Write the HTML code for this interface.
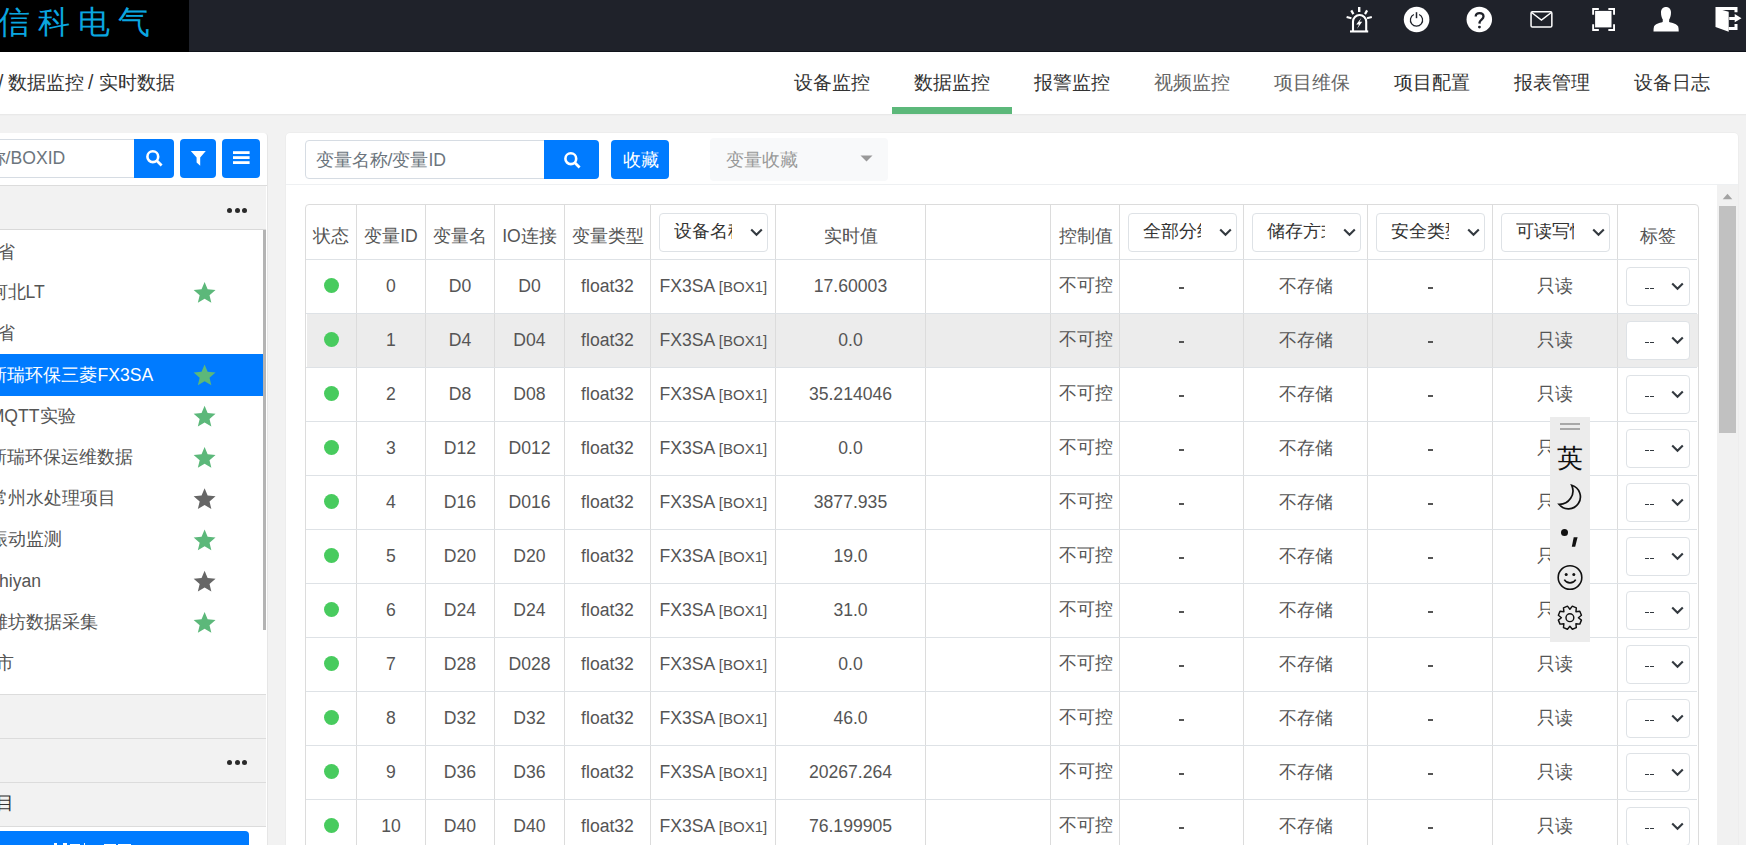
<!DOCTYPE html><html><head><meta charset="utf-8"><style>
*{box-sizing:border-box;margin:0;padding:0}
html,body{width:1746px;height:845px;overflow:hidden;background:#f2f2f2;font-family:"Liberation Sans",sans-serif;color:#555;position:relative}
.ab{position:absolute}
.t{position:absolute;white-space:nowrap;line-height:1}
.c{position:absolute;display:flex;align-items:center;justify-content:center;white-space:nowrap;font-size:17.6px;line-height:1;color:#555}
.vl{position:absolute;width:1px;background:#dcdcdc}
.hl{position:absolute;height:1px;background:#dee2e6}
.sel{position:absolute;border:1px solid #dee2e6;border-radius:4px;background:#fff}
.chev{position:absolute;width:12px;height:8px}
</style></head><body>
<div class="ab" style="left:0;top:0;width:1746px;height:52px;background:#1f222a"></div>
<div class="ab" style="left:0;top:51px;width:1746px;height:1px;background:#10131b"></div>
<div class="ab" style="left:0;top:0;width:189px;height:52px;background:#000"></div>
<div class="t" style="left:-2px;top:6px;font-family:'Liberation Serif',serif;font-size:32px;letter-spacing:8px;color:#0aa6e0">信科电气</div>
<svg class="ab" style="left:1340px;top:2px" width="36" height="36" viewBox="0 0 36 36">
<g stroke="#fff" fill="none">
<path d="M19.2 5v5" stroke-width="2.4"/>
<path d="M11.3 8.4l2.1 3.7" stroke-width="2.2"/><path d="M27.1 8.4l-2.1 3.7" stroke-width="2.2"/>
<path d="M6.6 15l4.8 1.2" stroke-width="2.2"/><path d="M31.8 15l-4.8 1.2" stroke-width="2.2"/>
<path d="M13 29v-9.4a6.6 6.6 0 0 1 13.2 0v9.4" stroke-width="2.1"/>
</g>
<rect x="10" y="28.4" width="18.2" height="2.1" fill="#fff"/>
<path d="M21.4 15.8L16.2 22.4H19L17 26.9L22.2 19.8H19.5Z" fill="#fff"/>
</svg>
<svg class="ab" style="left:1403px;top:6px" width="27" height="27" viewBox="0 0 27 27">
<circle cx="13.6" cy="13.5" r="12.8" fill="#fff"/>
<path d="M10.9 8.47A6.1 6.1 0 1 0 16.1 8.47" stroke="#1f222a" stroke-width="1.25" fill="none"/>
<path d="M13.5 6.2v6" stroke="#1f222a" stroke-width="1.5"/>
</svg>
<svg class="ab" style="left:1465.5px;top:6px" width="27" height="27" viewBox="0 0 27 27">
<circle cx="13.3" cy="13.5" r="12.75" fill="#fff"/>
<path d="M9.7 10.6C9.7 8.3 11.3 7.1 13.5 7.1C15.8 7.1 17.5 8.5 17.5 10.5C17.5 13.2 14.3 13.6 13.6 16.2L13.5 17.6" stroke="#1f222a" stroke-width="2.3" fill="none"/>
<circle cx="13.45" cy="21.1" r="1.45" fill="#1f222a"/>
</svg>
<svg class="ab" style="left:1529px;top:10px" width="25" height="19" viewBox="0 0 25 19">
<rect x="2.05" y="1.85" width="20.8" height="15.2" rx="1.4" stroke="#fff" stroke-width="1.5" fill="none"/>
<path d="M2.6 2.5l9.85 7.6 9.85-7.6" stroke="#fff" stroke-width="1.5" fill="none"/>
</svg>
<svg class="ab" style="left:1591px;top:7px" width="26" height="26" viewBox="0 0 26 26">
<rect x="4.1" y="3.9" width="16.4" height="16.5" fill="#fff"/>
<path d="M2.15 7.65V1.95H7.85M17.35 1.95H23.05V7.65M23.05 17.25V22.95H17.35M7.85 22.95H2.15V17.25" stroke="#fff" stroke-width="1.9" fill="none"/>
</svg>
<svg class="ab" style="left:1648px;top:2px" width="36" height="36" viewBox="0 0 36 36">
<path d="M18 5.1C15 5.1 13 7.3 13 10.5C13 13.5 13.8 16 14.8 17.5L14.7 20C11 21 7 22 6 24.5C5.6 25.8 5.5 27.5 5.5 29.6H30.7C30.7 27.5 30.6 25.8 30.2 24.5C29 22 25 21 21.1 20L21.2 17.5C22.2 16 23 13.5 23 10.5C23 7.3 21 5.1 18 5.1Z" fill="#fff"/>
</svg>
<svg class="ab" style="left:1710px;top:2px" width="36" height="36" viewBox="0 0 36 36">
<path d="M5.5 4.9H27.5V10.2H24.5V7.9H12.4L18.7 9.8V29.8L5.5 25.1Z" fill="#fff"/>
<path d="M18.7 24.9H24.5V22H27.5V27.9H18.7Z" fill="#fff"/>
<path d="M19.2 14.9H24.7V12.1L31.5 16.2L24.7 20.2V18.1H19.2Z" fill="#fff"/>
</svg>
<div class="ab" style="left:0;top:52px;width:1746px;height:62px;background:#fff"></div>
<div class="ab" style="left:0;top:114px;width:1746px;height:2px;background:linear-gradient(#e6e6e6,#f2f2f2)"></div>
<div class="t" style="left:-2px;top:73px;font-size:19.3px;color:#333">/</div>
<div class="t" style="left:8px;top:73px;font-size:19.3px;color:#333">数据监控</div>
<div class="t" style="left:88px;top:73px;font-size:19.3px;color:#333">/</div>
<div class="t" style="left:99px;top:73px;font-size:19.3px;color:#333">实时数据</div>
<div class="ab" style="left:772px;top:52px;width:120px;height:62px;display:flex;justify-content:center;align-items:center;font-size:19.3px;color:#333;padding-bottom:2px">设备监控</div>
<div class="ab" style="left:892px;top:52px;width:120px;height:62px;display:flex;justify-content:center;align-items:center;font-size:19.3px;color:#333;padding-bottom:2px">数据监控</div>
<div class="ab" style="left:1012px;top:52px;width:120px;height:62px;display:flex;justify-content:center;align-items:center;font-size:19.3px;color:#333;padding-bottom:2px">报警监控</div>
<div class="ab" style="left:1132px;top:52px;width:120px;height:62px;display:flex;justify-content:center;align-items:center;font-size:19.3px;color:#666;padding-bottom:2px">视频监控</div>
<div class="ab" style="left:1252px;top:52px;width:120px;height:62px;display:flex;justify-content:center;align-items:center;font-size:19.3px;color:#666;padding-bottom:2px">项目维保</div>
<div class="ab" style="left:1372px;top:52px;width:120px;height:62px;display:flex;justify-content:center;align-items:center;font-size:19.3px;color:#333;padding-bottom:2px">项目配置</div>
<div class="ab" style="left:1492px;top:52px;width:120px;height:62px;display:flex;justify-content:center;align-items:center;font-size:19.3px;color:#333;padding-bottom:2px">报表管理</div>
<div class="ab" style="left:1612px;top:52px;width:120px;height:62px;display:flex;justify-content:center;align-items:center;font-size:19.3px;color:#333;padding-bottom:2px">设备日志</div>
<div class="ab" style="left:892px;top:107px;width:120px;height:7px;background:#5cb87a"></div>
<div class="ab" style="left:-10px;top:133px;width:278px;height:760px;background:#fff;border:1px solid #e6e6e6;border-top:none;border-radius:4px"></div>
<div class="ab" style="left:-10px;top:139px;width:145px;height:39px;border:1px solid #d6dce3;background:#fff"></div>
<div class="t" style="left:-12.4px;top:150px;font-size:17.6px;color:#6c757d">称/BOXID</div>
<div class="ab" style="left:134px;top:139px;width:40px;height:39px;background:#007bff;border-radius:0 4px 4px 0"></div>
<div class="ab" style="left:180px;top:139px;width:36px;height:39px;background:#007bff;border-radius:4px"></div>
<div class="ab" style="left:222px;top:139px;width:38px;height:39px;background:#007bff;border-radius:4px"></div>
<svg class="ab" style="left:145px;top:149px" width="18" height="18" viewBox="0 0 18 18">
<circle cx="7.8" cy="7.7" r="5.4" stroke="#fff" stroke-width="2.6" fill="none"/>
<path d="M11.6 11.5l5 5" stroke="#fff" stroke-width="2.7"/></svg>
<svg class="ab" style="left:190px;top:150px" width="17" height="17" viewBox="0 0 17 17">
<path d="M0.8 1h15l-5.6 6.4v8.4l-3.6-3.4v-5z" fill="#fff"/></svg>
<svg class="ab" style="left:232px;top:150px" width="18" height="16" viewBox="0 0 18 16">
<g stroke="#fff" stroke-width="2.8" stroke-linecap="butt"><path d="M1 2.6h16.6"/><path d="M1 7.6h16.6"/><path d="M1 12.6h16.6"/></g></svg>
<div class="ab" style="left:-10px;top:185px;width:277px;height:1px;background:#dcdcdc"></div>
<div class="ab" style="left:-10px;top:186px;width:276px;height:44px;background:#f2f2f2;border-bottom:1px solid #d9d9d9"></div>
<div class="ab" style="left:227.2px;top:207.8px;width:5.2px;height:5.2px;border-radius:50%;background:#2a2a2a"></div><div class="ab" style="left:234.7px;top:207.8px;width:5.2px;height:5.2px;border-radius:50%;background:#2a2a2a"></div><div class="ab" style="left:242.2px;top:207.8px;width:5.2px;height:5.2px;border-radius:50%;background:#2a2a2a"></div>
<div class="ab" style="left:0;top:354px;width:263px;height:42px;background:#007bff"></div>
<div class="t" style="left:-3.5px;top:244px;font-size:17.6px;color:#555">省</div>
<div class="t" style="left:-10.4px;top:284px;font-size:17.6px;color:#555">河北LT</div>
<div class="t" style="left:-3.5px;top:325px;font-size:17.6px;color:#555">省</div>
<div class="t" style="left:-10.6px;top:367px;font-size:17.6px;color:#fff">新瑞环保三菱FX3SA</div>
<div class="t" style="left:-10.3px;top:408px;font-size:17.6px;color:#555">MQTT实验</div>
<div class="t" style="left:-10.6px;top:449px;font-size:17.6px;color:#555">新瑞环保运维数据</div>
<div class="t" style="left:-10.3px;top:490px;font-size:17.6px;color:#555">常州水处理项目</div>
<div class="t" style="left:-9.6px;top:531px;font-size:17.6px;color:#555">振动监测</div>
<div class="t" style="left:-9.8px;top:573px;font-size:17.6px;color:#555">shiyan</div>
<div class="t" style="left:-9.6px;top:614px;font-size:17.6px;color:#555">潍坊数据采集</div>
<div class="t" style="left:-3.6px;top:655px;font-size:17.6px;color:#555">市</div>
<svg class="ab" style="left:0;top:0" width="267" height="845"><polygon points="204.60,282.05 207.64,289.36 215.54,290.00 209.52,295.15 211.36,302.85 204.60,298.73 197.84,302.85 199.68,295.15 193.66,290.00 201.56,289.36" fill="#5cb87a"/><polygon points="204.60,364.55 207.64,371.86 215.54,372.50 209.52,377.65 211.36,385.35 204.60,381.23 197.84,385.35 199.68,377.65 193.66,372.50 201.56,371.86" fill="#5cb87a"/><polygon points="204.60,405.80 207.64,413.11 215.54,413.75 209.52,418.90 211.36,426.60 204.60,422.48 197.84,426.60 199.68,418.90 193.66,413.75 201.56,413.11" fill="#5cb87a"/><polygon points="204.60,447.05 207.64,454.36 215.54,455.00 209.52,460.15 211.36,467.85 204.60,463.73 197.84,467.85 199.68,460.15 193.66,455.00 201.56,454.36" fill="#5cb87a"/><polygon points="204.60,488.30 207.64,495.61 215.54,496.25 209.52,501.40 211.36,509.10 204.60,504.98 197.84,509.10 199.68,501.40 193.66,496.25 201.56,495.61" fill="#666"/><polygon points="204.60,529.55 207.64,536.86 215.54,537.50 209.52,542.65 211.36,550.35 204.60,546.22 197.84,550.35 199.68,542.65 193.66,537.50 201.56,536.86" fill="#5cb87a"/><polygon points="204.60,570.80 207.64,578.11 215.54,578.75 209.52,583.90 211.36,591.60 204.60,587.47 197.84,591.60 199.68,583.90 193.66,578.75 201.56,578.11" fill="#666"/><polygon points="204.60,612.05 207.64,619.36 215.54,620.00 209.52,625.15 211.36,632.85 204.60,628.72 197.84,632.85 199.68,625.15 193.66,620.00 201.56,619.36" fill="#5cb87a"/></svg>
<div class="ab" style="left:263px;top:230px;width:3px;height:400px;background:#b4b4b4"></div>
<div class="ab" style="left:-10px;top:694px;width:276px;height:133px;background:#f2f2f2"></div>
<div class="ab" style="left:-10px;top:694px;width:276px;height:1px;background:#dcdcdc"></div>
<div class="ab" style="left:-10px;top:738px;width:276px;height:1px;background:#dcdcdc"></div>
<div class="ab" style="left:-10px;top:782px;width:276px;height:1px;background:#dcdcdc"></div>
<div class="ab" style="left:-10px;top:826px;width:276px;height:1px;background:#dcdcdc"></div>
<div class="ab" style="left:227.2px;top:759.8px;width:5.2px;height:5.2px;border-radius:50%;background:#2a2a2a"></div><div class="ab" style="left:234.7px;top:759.8px;width:5.2px;height:5.2px;border-radius:50%;background:#2a2a2a"></div><div class="ab" style="left:242.2px;top:759.8px;width:5.2px;height:5.2px;border-radius:50%;background:#2a2a2a"></div>
<div class="t" style="left:-4px;top:795px;font-size:17.6px;color:#333">目</div>
<div class="ab" style="left:-10px;top:831px;width:259px;height:40px;background:#007bff;border-radius:4px"></div>
<div class="ab" style="left:53.5px;top:843px;width:3.5px;height:2px;background:#fff"></div>
<div class="ab" style="left:63px;top:843px;width:3.5px;height:2px;background:#fff"></div>
<div class="ab" style="left:70px;top:843.5px;width:10px;height:1.5px;background:#fff"></div>
<div class="ab" style="left:83.5px;top:843px;width:1.2px;height:2px;background:#fff"></div>
<div class="ab" style="left:104px;top:843.5px;width:12px;height:1.5px;background:#fff"></div>
<div class="ab" style="left:118px;top:843.5px;width:12.7px;height:1.5px;background:#fff"></div>
<div class="ab" style="left:286px;top:133px;width:1452px;height:760px;background:#fff;border-radius:4px;box-shadow:0 0 0 0.5px #e8e8e8"></div>
<div class="ab" style="left:286px;top:184px;width:1452px;height:1px;background:#eef0f2"></div>
<div class="ab" style="left:305px;top:140px;width:240px;height:39px;border:1px solid #d6dce3;border-radius:4px 0 0 4px"></div>
<div class="t" style="left:315.5px;top:151.5px;font-size:17.6px;color:#6c757d">变量名称/变量ID</div>
<div class="ab" style="left:544px;top:140px;width:55px;height:39px;background:#007bff;border-radius:0 4px 4px 0"></div>
<svg class="ab" style="left:563px;top:151px" width="18" height="18" viewBox="0 0 18 18">
<circle cx="7.8" cy="7.7" r="5.4" stroke="#fff" stroke-width="2.6" fill="none"/>
<path d="M11.6 11.5l5 5" stroke="#fff" stroke-width="2.7"/></svg>
<div class="ab" style="left:611px;top:140px;width:58px;height:39px;background:#007bff;border-radius:4px"></div>
<div class="t" style="left:623px;top:151.5px;font-size:17.6px;color:#fff">收藏</div>
<div class="ab" style="left:710px;top:138px;width:178px;height:43px;background:#f8f9fa;border-radius:4px"></div>
<div class="t" style="left:726px;top:151.5px;font-size:17.6px;color:#999">变量收藏</div>
<svg class="ab" style="left:860px;top:155px" width="13" height="7" viewBox="0 0 13 7"><path d="M0.5 0.5h12l-6 6z" fill="#999"/></svg>
<div class="ab" style="left:1717px;top:185px;width:21px;height:660px;background:#f1f1f1"></div>
<svg class="ab" style="left:1722px;top:193px" width="11" height="7" viewBox="0 0 11 7"><path d="M5.5 0.8l4.8 5.4h-9.6z" fill="#a3a3a3"/></svg>
<div class="ab" style="left:1719px;top:206px;width:17px;height:227px;background:#c1c1c1"></div>
<div class="ab" style="left:307px;top:314px;width:1391px;height:53px;background:#ececec"></div>
<div class="ab" style="left:305px;top:204px;width:1394px;height:700px;border:1px solid #dcdcdc;border-radius:4px"></div>
<div class="vl" style="left:356px;top:204px;height:641px"></div>
<div class="vl" style="left:425px;top:204px;height:641px"></div>
<div class="vl" style="left:494px;top:204px;height:641px"></div>
<div class="vl" style="left:564px;top:204px;height:641px"></div>
<div class="vl" style="left:650px;top:204px;height:641px"></div>
<div class="vl" style="left:775px;top:204px;height:641px"></div>
<div class="vl" style="left:925px;top:204px;height:641px"></div>
<div class="vl" style="left:1050px;top:204px;height:641px"></div>
<div class="vl" style="left:1119px;top:204px;height:641px"></div>
<div class="vl" style="left:1243px;top:204px;height:641px"></div>
<div class="vl" style="left:1367px;top:204px;height:641px"></div>
<div class="vl" style="left:1492px;top:204px;height:641px"></div>
<div class="vl" style="left:1617px;top:204px;height:641px"></div>
<div class="hl" style="left:306px;top:259px;width:1391px"></div>
<div class="hl" style="left:306px;top:313px;width:1391px"></div>
<div class="hl" style="left:306px;top:367px;width:1391px"></div>
<div class="hl" style="left:306px;top:421px;width:1391px"></div>
<div class="hl" style="left:306px;top:475px;width:1391px"></div>
<div class="hl" style="left:306px;top:529px;width:1391px"></div>
<div class="hl" style="left:306px;top:583px;width:1391px"></div>
<div class="hl" style="left:306px;top:637px;width:1391px"></div>
<div class="hl" style="left:306px;top:691px;width:1391px"></div>
<div class="hl" style="left:306px;top:745px;width:1391px"></div>
<div class="hl" style="left:306px;top:799px;width:1391px"></div>
<div class="c" style="left:306px;top:219px;width:50px;height:36px">状态</div>
<div class="c" style="left:357px;top:219px;width:68px;height:36px">变量ID</div>
<div class="c" style="left:426px;top:219px;width:68px;height:36px">变量名</div>
<div class="c" style="left:495px;top:219px;width:69px;height:36px">IO连接</div>
<div class="c" style="left:565px;top:219px;width:85px;height:36px">变量类型</div>
<div class="c" style="left:776px;top:219px;width:149px;height:36px">实时值</div>
<div class="t" style="left:1059px;top:228px;font-size:17.6px;color:#555">控制值</div>
<div class="c" style="left:1618px;top:219px;width:80px;height:36px">标签</div>
<div class="sel" style="left:659px;top:213px;width:109px;height:39px;overflow:hidden"></div>
<div class="t" style="left:674px;top:223px;width:58px;overflow:hidden;font-size:17.6px;color:#333">设备名称</div>
<svg class="ab" style="left:749.5px;top:228px" width="13" height="9" viewBox="0 0 13 9"><path d="M1.2 1.5l5.3 5.3 5.3-5.3" stroke="#343a40" stroke-width="2.1" fill="none"/></svg>
<div class="sel" style="left:1128px;top:213px;width:109px;height:39px;overflow:hidden"></div>
<div class="t" style="left:1143px;top:223px;width:58px;overflow:hidden;font-size:17.6px;color:#333">全部分组</div>
<svg class="ab" style="left:1218.5px;top:228px" width="13" height="9" viewBox="0 0 13 9"><path d="M1.2 1.5l5.3 5.3 5.3-5.3" stroke="#343a40" stroke-width="2.1" fill="none"/></svg>
<div class="sel" style="left:1252px;top:213px;width:109px;height:39px;overflow:hidden"></div>
<div class="t" style="left:1267px;top:223px;width:58px;overflow:hidden;font-size:17.6px;color:#333">储存方式</div>
<svg class="ab" style="left:1342.5px;top:228px" width="13" height="9" viewBox="0 0 13 9"><path d="M1.2 1.5l5.3 5.3 5.3-5.3" stroke="#343a40" stroke-width="2.1" fill="none"/></svg>
<div class="sel" style="left:1376px;top:213px;width:109px;height:39px;overflow:hidden"></div>
<div class="t" style="left:1391px;top:223px;width:58px;overflow:hidden;font-size:17.6px;color:#333">安全类型</div>
<svg class="ab" style="left:1466.5px;top:228px" width="13" height="9" viewBox="0 0 13 9"><path d="M1.2 1.5l5.3 5.3 5.3-5.3" stroke="#343a40" stroke-width="2.1" fill="none"/></svg>
<div class="sel" style="left:1501px;top:213px;width:109px;height:39px;overflow:hidden"></div>
<div class="t" style="left:1516px;top:223px;width:58px;overflow:hidden;font-size:17.6px;color:#333">可读写性</div>
<svg class="ab" style="left:1591.5px;top:228px" width="13" height="9" viewBox="0 0 13 9"><path d="M1.2 1.5l5.3 5.3 5.3-5.3" stroke="#343a40" stroke-width="2.1" fill="none"/></svg>
<div class="ab" style="left:323.6px;top:278px;width:15.2px;height:15.2px;border-radius:50%;background:#48cb5e"></div>
<div class="c" style="left:357px;top:260px;width:68px;height:53px;">0</div>
<div class="c" style="left:426px;top:260px;width:68px;height:53px;">D0</div>
<div class="c" style="left:495px;top:260px;width:69px;height:53px;">D0</div>
<div class="c" style="left:565px;top:260px;width:85px;height:53px;">float32</div>
<div class="t" style="left:659.5px;top:278px;font-size:17.6px;color:#555">FX3SA<span style="font-size:15px;margin-left:3.6px">[BOX1]</span></div>
<div class="c" style="left:776px;top:260px;width:149px;height:53px;">17.60003</div>
<div class="t" style="left:1059px;top:277px;font-size:17.6px;color:#555">不可控</div>
<div class="ab" style="left:1178.5px;top:287.2px;width:5.5px;height:2px;background:#555"></div>
<div class="ab" style="left:1427.5px;top:287.2px;width:5.5px;height:2px;background:#555"></div>
<div class="c" style="left:1244px;top:260px;width:123px;height:53px;">不存储</div>
<div class="c" style="left:1493px;top:260px;width:124px;height:53px;">只读</div>
<div class="sel" style="left:1626px;top:267px;width:64px;height:39px"></div>
<div class="ab" style="left:1644.5px;top:287.6px;width:4px;height:1.4px;background:#343a40"></div>
<div class="ab" style="left:1649.5px;top:287.6px;width:4px;height:1.4px;background:#343a40"></div>
<svg class="ab" style="left:1671px;top:282px" width="13" height="9" viewBox="0 0 13 9"><path d="M1.2 1.5l5.3 5.3 5.3-5.3" stroke="#343a40" stroke-width="2.1" fill="none"/></svg>
<div class="ab" style="left:323.6px;top:332px;width:15.2px;height:15.2px;border-radius:50%;background:#48cb5e"></div>
<div class="c" style="left:357px;top:314px;width:68px;height:53px;">1</div>
<div class="c" style="left:426px;top:314px;width:68px;height:53px;">D4</div>
<div class="c" style="left:495px;top:314px;width:69px;height:53px;">D04</div>
<div class="c" style="left:565px;top:314px;width:85px;height:53px;">float32</div>
<div class="t" style="left:659.5px;top:332px;font-size:17.6px;color:#555">FX3SA<span style="font-size:15px;margin-left:3.6px">[BOX1]</span></div>
<div class="c" style="left:776px;top:314px;width:149px;height:53px;">0.0</div>
<div class="t" style="left:1059px;top:331px;font-size:17.6px;color:#555">不可控</div>
<div class="ab" style="left:1178.5px;top:341.2px;width:5.5px;height:2px;background:#555"></div>
<div class="ab" style="left:1427.5px;top:341.2px;width:5.5px;height:2px;background:#555"></div>
<div class="c" style="left:1244px;top:314px;width:123px;height:53px;">不存储</div>
<div class="c" style="left:1493px;top:314px;width:124px;height:53px;">只读</div>
<div class="sel" style="left:1626px;top:321px;width:64px;height:39px"></div>
<div class="ab" style="left:1644.5px;top:341.6px;width:4px;height:1.4px;background:#343a40"></div>
<div class="ab" style="left:1649.5px;top:341.6px;width:4px;height:1.4px;background:#343a40"></div>
<svg class="ab" style="left:1671px;top:336px" width="13" height="9" viewBox="0 0 13 9"><path d="M1.2 1.5l5.3 5.3 5.3-5.3" stroke="#343a40" stroke-width="2.1" fill="none"/></svg>
<div class="ab" style="left:323.6px;top:386px;width:15.2px;height:15.2px;border-radius:50%;background:#48cb5e"></div>
<div class="c" style="left:357px;top:368px;width:68px;height:53px;">2</div>
<div class="c" style="left:426px;top:368px;width:68px;height:53px;">D8</div>
<div class="c" style="left:495px;top:368px;width:69px;height:53px;">D08</div>
<div class="c" style="left:565px;top:368px;width:85px;height:53px;">float32</div>
<div class="t" style="left:659.5px;top:386px;font-size:17.6px;color:#555">FX3SA<span style="font-size:15px;margin-left:3.6px">[BOX1]</span></div>
<div class="c" style="left:776px;top:368px;width:149px;height:53px;">35.214046</div>
<div class="t" style="left:1059px;top:385px;font-size:17.6px;color:#555">不可控</div>
<div class="ab" style="left:1178.5px;top:395.2px;width:5.5px;height:2px;background:#555"></div>
<div class="ab" style="left:1427.5px;top:395.2px;width:5.5px;height:2px;background:#555"></div>
<div class="c" style="left:1244px;top:368px;width:123px;height:53px;">不存储</div>
<div class="c" style="left:1493px;top:368px;width:124px;height:53px;">只读</div>
<div class="sel" style="left:1626px;top:375px;width:64px;height:39px"></div>
<div class="ab" style="left:1644.5px;top:395.6px;width:4px;height:1.4px;background:#343a40"></div>
<div class="ab" style="left:1649.5px;top:395.6px;width:4px;height:1.4px;background:#343a40"></div>
<svg class="ab" style="left:1671px;top:390px" width="13" height="9" viewBox="0 0 13 9"><path d="M1.2 1.5l5.3 5.3 5.3-5.3" stroke="#343a40" stroke-width="2.1" fill="none"/></svg>
<div class="ab" style="left:323.6px;top:440px;width:15.2px;height:15.2px;border-radius:50%;background:#48cb5e"></div>
<div class="c" style="left:357px;top:422px;width:68px;height:53px;">3</div>
<div class="c" style="left:426px;top:422px;width:68px;height:53px;">D12</div>
<div class="c" style="left:495px;top:422px;width:69px;height:53px;">D012</div>
<div class="c" style="left:565px;top:422px;width:85px;height:53px;">float32</div>
<div class="t" style="left:659.5px;top:440px;font-size:17.6px;color:#555">FX3SA<span style="font-size:15px;margin-left:3.6px">[BOX1]</span></div>
<div class="c" style="left:776px;top:422px;width:149px;height:53px;">0.0</div>
<div class="t" style="left:1059px;top:439px;font-size:17.6px;color:#555">不可控</div>
<div class="ab" style="left:1178.5px;top:449.2px;width:5.5px;height:2px;background:#555"></div>
<div class="ab" style="left:1427.5px;top:449.2px;width:5.5px;height:2px;background:#555"></div>
<div class="c" style="left:1244px;top:422px;width:123px;height:53px;">不存储</div>
<div class="c" style="left:1493px;top:422px;width:124px;height:53px;">只读</div>
<div class="sel" style="left:1626px;top:429px;width:64px;height:39px"></div>
<div class="ab" style="left:1644.5px;top:449.6px;width:4px;height:1.4px;background:#343a40"></div>
<div class="ab" style="left:1649.5px;top:449.6px;width:4px;height:1.4px;background:#343a40"></div>
<svg class="ab" style="left:1671px;top:444px" width="13" height="9" viewBox="0 0 13 9"><path d="M1.2 1.5l5.3 5.3 5.3-5.3" stroke="#343a40" stroke-width="2.1" fill="none"/></svg>
<div class="ab" style="left:323.6px;top:494px;width:15.2px;height:15.2px;border-radius:50%;background:#48cb5e"></div>
<div class="c" style="left:357px;top:476px;width:68px;height:53px;">4</div>
<div class="c" style="left:426px;top:476px;width:68px;height:53px;">D16</div>
<div class="c" style="left:495px;top:476px;width:69px;height:53px;">D016</div>
<div class="c" style="left:565px;top:476px;width:85px;height:53px;">float32</div>
<div class="t" style="left:659.5px;top:494px;font-size:17.6px;color:#555">FX3SA<span style="font-size:15px;margin-left:3.6px">[BOX1]</span></div>
<div class="c" style="left:776px;top:476px;width:149px;height:53px;">3877.935</div>
<div class="t" style="left:1059px;top:493px;font-size:17.6px;color:#555">不可控</div>
<div class="ab" style="left:1178.5px;top:503.2px;width:5.5px;height:2px;background:#555"></div>
<div class="ab" style="left:1427.5px;top:503.2px;width:5.5px;height:2px;background:#555"></div>
<div class="c" style="left:1244px;top:476px;width:123px;height:53px;">不存储</div>
<div class="c" style="left:1493px;top:476px;width:124px;height:53px;">只读</div>
<div class="sel" style="left:1626px;top:483px;width:64px;height:39px"></div>
<div class="ab" style="left:1644.5px;top:503.6px;width:4px;height:1.4px;background:#343a40"></div>
<div class="ab" style="left:1649.5px;top:503.6px;width:4px;height:1.4px;background:#343a40"></div>
<svg class="ab" style="left:1671px;top:498px" width="13" height="9" viewBox="0 0 13 9"><path d="M1.2 1.5l5.3 5.3 5.3-5.3" stroke="#343a40" stroke-width="2.1" fill="none"/></svg>
<div class="ab" style="left:323.6px;top:548px;width:15.2px;height:15.2px;border-radius:50%;background:#48cb5e"></div>
<div class="c" style="left:357px;top:530px;width:68px;height:53px;">5</div>
<div class="c" style="left:426px;top:530px;width:68px;height:53px;">D20</div>
<div class="c" style="left:495px;top:530px;width:69px;height:53px;">D20</div>
<div class="c" style="left:565px;top:530px;width:85px;height:53px;">float32</div>
<div class="t" style="left:659.5px;top:548px;font-size:17.6px;color:#555">FX3SA<span style="font-size:15px;margin-left:3.6px">[BOX1]</span></div>
<div class="c" style="left:776px;top:530px;width:149px;height:53px;">19.0</div>
<div class="t" style="left:1059px;top:547px;font-size:17.6px;color:#555">不可控</div>
<div class="ab" style="left:1178.5px;top:557.2px;width:5.5px;height:2px;background:#555"></div>
<div class="ab" style="left:1427.5px;top:557.2px;width:5.5px;height:2px;background:#555"></div>
<div class="c" style="left:1244px;top:530px;width:123px;height:53px;">不存储</div>
<div class="c" style="left:1493px;top:530px;width:124px;height:53px;">只读</div>
<div class="sel" style="left:1626px;top:537px;width:64px;height:39px"></div>
<div class="ab" style="left:1644.5px;top:557.6px;width:4px;height:1.4px;background:#343a40"></div>
<div class="ab" style="left:1649.5px;top:557.6px;width:4px;height:1.4px;background:#343a40"></div>
<svg class="ab" style="left:1671px;top:552px" width="13" height="9" viewBox="0 0 13 9"><path d="M1.2 1.5l5.3 5.3 5.3-5.3" stroke="#343a40" stroke-width="2.1" fill="none"/></svg>
<div class="ab" style="left:323.6px;top:602px;width:15.2px;height:15.2px;border-radius:50%;background:#48cb5e"></div>
<div class="c" style="left:357px;top:584px;width:68px;height:53px;">6</div>
<div class="c" style="left:426px;top:584px;width:68px;height:53px;">D24</div>
<div class="c" style="left:495px;top:584px;width:69px;height:53px;">D24</div>
<div class="c" style="left:565px;top:584px;width:85px;height:53px;">float32</div>
<div class="t" style="left:659.5px;top:602px;font-size:17.6px;color:#555">FX3SA<span style="font-size:15px;margin-left:3.6px">[BOX1]</span></div>
<div class="c" style="left:776px;top:584px;width:149px;height:53px;">31.0</div>
<div class="t" style="left:1059px;top:601px;font-size:17.6px;color:#555">不可控</div>
<div class="ab" style="left:1178.5px;top:611.2px;width:5.5px;height:2px;background:#555"></div>
<div class="ab" style="left:1427.5px;top:611.2px;width:5.5px;height:2px;background:#555"></div>
<div class="c" style="left:1244px;top:584px;width:123px;height:53px;">不存储</div>
<div class="c" style="left:1493px;top:584px;width:124px;height:53px;">只读</div>
<div class="sel" style="left:1626px;top:591px;width:64px;height:39px"></div>
<div class="ab" style="left:1644.5px;top:611.6px;width:4px;height:1.4px;background:#343a40"></div>
<div class="ab" style="left:1649.5px;top:611.6px;width:4px;height:1.4px;background:#343a40"></div>
<svg class="ab" style="left:1671px;top:606px" width="13" height="9" viewBox="0 0 13 9"><path d="M1.2 1.5l5.3 5.3 5.3-5.3" stroke="#343a40" stroke-width="2.1" fill="none"/></svg>
<div class="ab" style="left:323.6px;top:656px;width:15.2px;height:15.2px;border-radius:50%;background:#48cb5e"></div>
<div class="c" style="left:357px;top:638px;width:68px;height:53px;">7</div>
<div class="c" style="left:426px;top:638px;width:68px;height:53px;">D28</div>
<div class="c" style="left:495px;top:638px;width:69px;height:53px;">D028</div>
<div class="c" style="left:565px;top:638px;width:85px;height:53px;">float32</div>
<div class="t" style="left:659.5px;top:656px;font-size:17.6px;color:#555">FX3SA<span style="font-size:15px;margin-left:3.6px">[BOX1]</span></div>
<div class="c" style="left:776px;top:638px;width:149px;height:53px;">0.0</div>
<div class="t" style="left:1059px;top:655px;font-size:17.6px;color:#555">不可控</div>
<div class="ab" style="left:1178.5px;top:665.2px;width:5.5px;height:2px;background:#555"></div>
<div class="ab" style="left:1427.5px;top:665.2px;width:5.5px;height:2px;background:#555"></div>
<div class="c" style="left:1244px;top:638px;width:123px;height:53px;">不存储</div>
<div class="c" style="left:1493px;top:638px;width:124px;height:53px;">只读</div>
<div class="sel" style="left:1626px;top:645px;width:64px;height:39px"></div>
<div class="ab" style="left:1644.5px;top:665.6px;width:4px;height:1.4px;background:#343a40"></div>
<div class="ab" style="left:1649.5px;top:665.6px;width:4px;height:1.4px;background:#343a40"></div>
<svg class="ab" style="left:1671px;top:660px" width="13" height="9" viewBox="0 0 13 9"><path d="M1.2 1.5l5.3 5.3 5.3-5.3" stroke="#343a40" stroke-width="2.1" fill="none"/></svg>
<div class="ab" style="left:323.6px;top:710px;width:15.2px;height:15.2px;border-radius:50%;background:#48cb5e"></div>
<div class="c" style="left:357px;top:692px;width:68px;height:53px;">8</div>
<div class="c" style="left:426px;top:692px;width:68px;height:53px;">D32</div>
<div class="c" style="left:495px;top:692px;width:69px;height:53px;">D32</div>
<div class="c" style="left:565px;top:692px;width:85px;height:53px;">float32</div>
<div class="t" style="left:659.5px;top:710px;font-size:17.6px;color:#555">FX3SA<span style="font-size:15px;margin-left:3.6px">[BOX1]</span></div>
<div class="c" style="left:776px;top:692px;width:149px;height:53px;">46.0</div>
<div class="t" style="left:1059px;top:709px;font-size:17.6px;color:#555">不可控</div>
<div class="ab" style="left:1178.5px;top:719.2px;width:5.5px;height:2px;background:#555"></div>
<div class="ab" style="left:1427.5px;top:719.2px;width:5.5px;height:2px;background:#555"></div>
<div class="c" style="left:1244px;top:692px;width:123px;height:53px;">不存储</div>
<div class="c" style="left:1493px;top:692px;width:124px;height:53px;">只读</div>
<div class="sel" style="left:1626px;top:699px;width:64px;height:39px"></div>
<div class="ab" style="left:1644.5px;top:719.6px;width:4px;height:1.4px;background:#343a40"></div>
<div class="ab" style="left:1649.5px;top:719.6px;width:4px;height:1.4px;background:#343a40"></div>
<svg class="ab" style="left:1671px;top:714px" width="13" height="9" viewBox="0 0 13 9"><path d="M1.2 1.5l5.3 5.3 5.3-5.3" stroke="#343a40" stroke-width="2.1" fill="none"/></svg>
<div class="ab" style="left:323.6px;top:764px;width:15.2px;height:15.2px;border-radius:50%;background:#48cb5e"></div>
<div class="c" style="left:357px;top:746px;width:68px;height:53px;">9</div>
<div class="c" style="left:426px;top:746px;width:68px;height:53px;">D36</div>
<div class="c" style="left:495px;top:746px;width:69px;height:53px;">D36</div>
<div class="c" style="left:565px;top:746px;width:85px;height:53px;">float32</div>
<div class="t" style="left:659.5px;top:764px;font-size:17.6px;color:#555">FX3SA<span style="font-size:15px;margin-left:3.6px">[BOX1]</span></div>
<div class="c" style="left:776px;top:746px;width:149px;height:53px;">20267.264</div>
<div class="t" style="left:1059px;top:763px;font-size:17.6px;color:#555">不可控</div>
<div class="ab" style="left:1178.5px;top:773.2px;width:5.5px;height:2px;background:#555"></div>
<div class="ab" style="left:1427.5px;top:773.2px;width:5.5px;height:2px;background:#555"></div>
<div class="c" style="left:1244px;top:746px;width:123px;height:53px;">不存储</div>
<div class="c" style="left:1493px;top:746px;width:124px;height:53px;">只读</div>
<div class="sel" style="left:1626px;top:753px;width:64px;height:39px"></div>
<div class="ab" style="left:1644.5px;top:773.6px;width:4px;height:1.4px;background:#343a40"></div>
<div class="ab" style="left:1649.5px;top:773.6px;width:4px;height:1.4px;background:#343a40"></div>
<svg class="ab" style="left:1671px;top:768px" width="13" height="9" viewBox="0 0 13 9"><path d="M1.2 1.5l5.3 5.3 5.3-5.3" stroke="#343a40" stroke-width="2.1" fill="none"/></svg>
<div class="ab" style="left:323.6px;top:818px;width:15.2px;height:15.2px;border-radius:50%;background:#48cb5e"></div>
<div class="c" style="left:357px;top:800px;width:68px;height:53px;">10</div>
<div class="c" style="left:426px;top:800px;width:68px;height:53px;">D40</div>
<div class="c" style="left:495px;top:800px;width:69px;height:53px;">D40</div>
<div class="c" style="left:565px;top:800px;width:85px;height:53px;">float32</div>
<div class="t" style="left:659.5px;top:818px;font-size:17.6px;color:#555">FX3SA<span style="font-size:15px;margin-left:3.6px">[BOX1]</span></div>
<div class="c" style="left:776px;top:800px;width:149px;height:53px;">76.199905</div>
<div class="t" style="left:1059px;top:817px;font-size:17.6px;color:#555">不可控</div>
<div class="ab" style="left:1178.5px;top:827.2px;width:5.5px;height:2px;background:#555"></div>
<div class="ab" style="left:1427.5px;top:827.2px;width:5.5px;height:2px;background:#555"></div>
<div class="c" style="left:1244px;top:800px;width:123px;height:53px;">不存储</div>
<div class="c" style="left:1493px;top:800px;width:124px;height:53px;">只读</div>
<div class="sel" style="left:1626px;top:807px;width:64px;height:39px"></div>
<div class="ab" style="left:1644.5px;top:827.6px;width:4px;height:1.4px;background:#343a40"></div>
<div class="ab" style="left:1649.5px;top:827.6px;width:4px;height:1.4px;background:#343a40"></div>
<svg class="ab" style="left:1671px;top:822px" width="13" height="9" viewBox="0 0 13 9"><path d="M1.2 1.5l5.3 5.3 5.3-5.3" stroke="#343a40" stroke-width="2.1" fill="none"/></svg>
<div class="ab" style="left:323.6px;top:872px;width:15.2px;height:15.2px;border-radius:50%;background:#48cb5e"></div>
<div class="c" style="left:357px;top:854px;width:68px;height:53px;">11</div>
<div class="c" style="left:426px;top:854px;width:68px;height:53px;">D44</div>
<div class="c" style="left:495px;top:854px;width:69px;height:53px;">D44</div>
<div class="c" style="left:565px;top:854px;width:85px;height:53px;">float32</div>
<div class="t" style="left:659.5px;top:872px;font-size:17.6px;color:#555">FX3SA<span style="font-size:15px;margin-left:3.6px">[BOX1]</span></div>
<div class="c" style="left:776px;top:854px;width:149px;height:53px;">0.0</div>
<div class="t" style="left:1059px;top:871px;font-size:17.6px;color:#555">不可控</div>
<div class="ab" style="left:1178.5px;top:881.2px;width:5.5px;height:2px;background:#555"></div>
<div class="ab" style="left:1427.5px;top:881.2px;width:5.5px;height:2px;background:#555"></div>
<div class="c" style="left:1244px;top:854px;width:123px;height:53px;">不存储</div>
<div class="c" style="left:1493px;top:854px;width:124px;height:53px;">只读</div>
<div class="sel" style="left:1626px;top:861px;width:64px;height:39px"></div>
<div class="ab" style="left:1644.5px;top:881.6px;width:4px;height:1.4px;background:#343a40"></div>
<div class="ab" style="left:1649.5px;top:881.6px;width:4px;height:1.4px;background:#343a40"></div>
<svg class="ab" style="left:1671px;top:876px" width="13" height="9" viewBox="0 0 13 9"><path d="M1.2 1.5l5.3 5.3 5.3-5.3" stroke="#343a40" stroke-width="2.1" fill="none"/></svg>
<div class="ab" style="left:1550px;top:417px;width:40px;height:225px;background:#ececec"></div>
<div class="ab" style="left:1560px;top:423.3px;width:20px;height:1.8px;background:#a8a8a8"></div>
<div class="ab" style="left:1560px;top:427.9px;width:20px;height:1.8px;background:#a8a8a8"></div>
<div class="t" style="left:1557px;top:445px;font-size:26px;color:#111">英</div>
<svg class="ab" style="left:1557px;top:484px" width="28" height="28" viewBox="0 0 28 28">
<path d="M14.75 1.3A12 12 0 1 1 2 20.3A13.5 13.5 0 0 0 14.75 1.3Z" stroke="#111" stroke-width="1.7" fill="none" stroke-linejoin="miter"/></svg>
<div class="ab" style="left:1561px;top:529px;width:7px;height:7px;border-radius:50%;background:#111"></div>
<svg class="ab" style="left:1570px;top:537px" width="9" height="11" viewBox="0 0 9 11"><path d="M3.7 0.3H7.6L5.2 9.8H1.8Z" fill="#111"/></svg>
<svg class="ab" style="left:1556px;top:564px" width="28" height="28" viewBox="0 0 28 28">
<circle cx="14" cy="13.5" r="11.8" stroke="#111" stroke-width="1.6" fill="none"/>
<circle cx="10.2" cy="10.6" r="1.5" fill="#111"/><circle cx="17.8" cy="10.6" r="1.5" fill="#111"/>
<path d="M8.3 15.6a6.6 6.6 0 0 0 11.4 0" stroke="#111" stroke-width="1.6" fill="none"/></svg>
<svg class="ab" style="left:1556px;top:604px" width="28" height="28" viewBox="0 0 28 28">
<polygon points="22.40,13.70 25.44,16.15 23.80,20.13 19.91,19.71 20.33,23.60 16.35,25.24 13.90,22.20 11.45,25.24 7.47,23.60 7.89,19.71 4.00,20.13 2.36,16.15 5.40,13.70 2.36,11.25 4.00,7.27 7.89,7.69 7.47,3.80 11.45,2.16 13.90,5.20 16.35,2.16 20.33,3.80 19.91,7.69 23.80,7.27 25.44,11.25" stroke="#111" stroke-width="1.45" fill="none" stroke-linejoin="round"/>
<circle cx="13.9" cy="13.7" r="3.9" stroke="#111" stroke-width="1.45" fill="none"/></svg>
</body></html>
